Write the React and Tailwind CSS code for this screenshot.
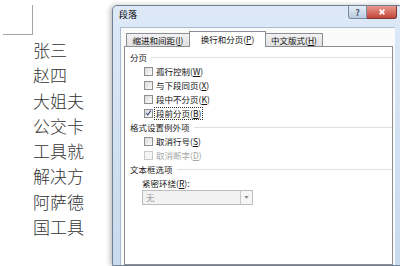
import React from "react";

const names = ["张三", "赵四", "大姐夫", "公交卡", "工具就", "解决方", "阿萨德", "国工具"];

function Key({ label, k }) {
  return (
    <span>
      {label}(<span className="underline">{k}</span>)
    </span>
  );
}

function GroupTitle({ children }) {
  return (
    <div className="flex items-center h-[14px]">
      <span className="text-[#222]">{children}</span>
      <div className="flex-1 h-px bg-[#e0e0e0] ml-[4px]" />
    </div>
  );
}

function Check({ label, k, checked, disabled, focus }) {
  return (
    <div className="flex items-center h-[14px] pl-[14px]">
      <div
        className={
          "w-[9px] h-[9px] border flex items-center justify-center " +
          (disabled
            ? "border-[#c9c9c9] bg-[#f4f4f4]"
            : "border-[#8e8f8f] bg-gradient-to-br from-[#dcdcdc] to-[#fbfbfb]")
        }
      >
        {checked && (
          <svg viewBox="0 0 9 9" className="w-[8px] h-[8px]">
            <path d="M1.5 4.5 L3.5 7 L7.5 1.5" fill="none" stroke="#2a3d7a" strokeWidth="1.3" />
          </svg>
        )}
      </div>
      <span
        className={
          "ml-[2px] px-[1px] leading-[11px] " +
          (disabled ? "text-[#a6a6a6] " : "text-[#111] ") +
          (focus ? "outline outline-1 outline-dotted outline-[#333]" : "")
        }
      >
        <Key label={label} k={k} />
      </span>
    </div>
  );
}

export default function App() {
  return (
    <div className="w-[400px] h-[266px] overflow-hidden bg-white flex font-['Noto_Sans_CJK_SC',sans-serif]">
      {/* document page */}
      <div className="w-[112px] shrink-0">
        <div className="ml-[3px] mt-[5px] w-[30px] h-[30px] border-r border-b border-[#a3a3a3]" />
        <div className="pl-[33px] mt-[2px] text-[17px] leading-[25.3px] font-light text-[#333]">
          {names.map((n) => (
            <div key={n}>{n}</div>
          ))}
        </div>
      </div>

      {/* dialog window */}
      <div className="w-[292px] shrink-0 mt-[5px] flex flex-col border border-[#6f8094] rounded-t-[5px] bg-gradient-to-b from-[#dde9f7] to-[#c8daee] shadow-[-2px_0_5px_rgba(0,0,0,0.25)] text-[8.5px]">
        <div className="h-[21px] flex justify-between items-start">
          <span className="pl-[6px] pt-[3px] leading-[12px] text-[9px] text-black">段落</span>
          <div className="flex mr-[6px]">
            <div className="w-[19px] h-[13px] border border-t-0 border-[#7a8ba0] rounded-bl-[3px] bg-gradient-to-b from-[#e6eef8] to-[#b9cbe0] flex items-center justify-center text-[9px] leading-none font-bold text-[#4a5a70]">
              ?
            </div>
            <div className="w-[30px] h-[13px] border border-t-0 border-l-0 border-[#7a3a34] rounded-br-[3px] bg-gradient-to-b from-[#e79a8e] to-[#c4443a] flex items-center justify-center">
              <svg viewBox="0 0 10 10" className="w-[8px] h-[8px]">
                <path d="M2 2 L8 8 M8 2 L2 8" stroke="#ffffff" strokeWidth="2" />
              </svg>
            </div>
          </div>
        </div>

        <div className="flex-1 ml-[7px] mr-[8px] bg-[#fafafa] border-l border-t border-[#a9bdd2] flex flex-col">
          {/* tabs */}
          <div className="h-[18px] flex items-end pl-[5px] pr-[1px]">
            <div className="w-[64px] h-[13px] border border-b-0 border-[#8c8e94] bg-gradient-to-b from-[#f2f2f2] to-[#e1e1e1] flex items-center justify-center text-[#111]">
              <Key label="缩进和间距" k="I" />
            </div>
            <div className="w-[77px] h-[16px] -mx-[1px] -mb-px relative z-10 border border-b-0 border-[#8c8e94] bg-white flex items-center justify-center text-[#111]">
              <Key label="换行和分页" k="P" />
            </div>
            <div className="w-[58px] h-[13px] border border-b-0 border-[#8c8e94] bg-gradient-to-b from-[#f2f2f2] to-[#e1e1e1] flex items-center justify-center text-[#111]">
              <Key label="中文版式" k="H" />
            </div>
          </div>

          {/* panel */}
          <div className="flex-1 ml-[3px] mr-[2px] border border-[#8c8e94] bg-white pt-[3px] pl-[5px]">
            <GroupTitle>分页</GroupTitle>
            <Check label="孤行控制" k="W" />
            <Check label="与下段同页" k="X" />
            <Check label="段中不分页" k="K" />
            <Check label="段前分页" k="B" checked focus />
            <GroupTitle>格式设置例外项</GroupTitle>
            <Check label="取消行号" k="S" />
            <Check label="取消断字" k="D" disabled />
            <GroupTitle>文本框选项</GroupTitle>
            <div className="h-[14px] pl-[12px] flex items-center text-[#111]">
              <Key label="紧密环绕" k="R" />:
            </div>
            <div className="ml-[12px] w-[111px] h-[15px] border border-[#bdbdbd] bg-[#f2f2f2] flex">
              <span className="flex-1 pl-[3px] leading-[13px] text-[#a0a0a0]">无</span>
              <div className="w-[12px] border-l border-[#c8c8c8] bg-[#f6f6f6] flex items-center justify-center">
                <svg viewBox="0 0 6 4" className="w-[5px] h-[3px]">
                  <path d="M0 0 L6 0 L3 3.5 Z" fill="#8a8a8a" />
                </svg>
              </div>
            </div>
          </div>
        </div>
      </div>
    </div>
  );
}
